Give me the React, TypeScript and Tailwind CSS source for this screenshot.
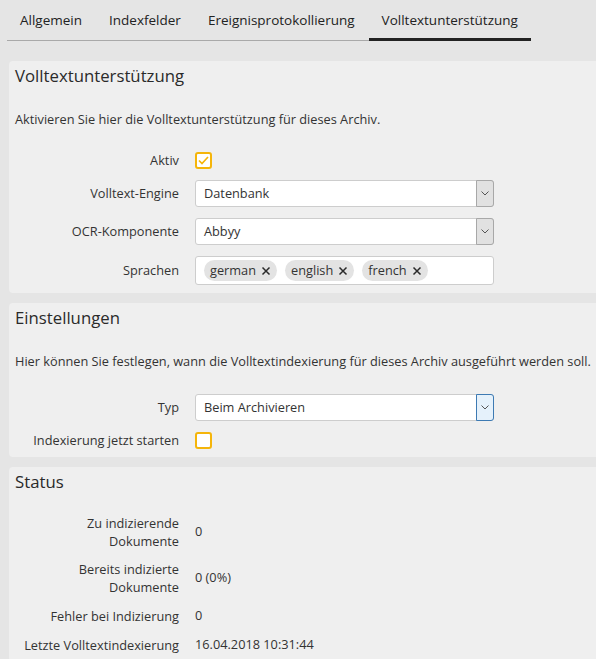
import type { ReactNode } from "react"

const tabs = ["Allgemein", "Indexfelder", "Ereignisprotokollierung", "Volltextunterstützung"]

function Chevron() {
  return (
    <svg width="8" height="5" viewBox="0 0 8 5" fill="none">
      <path d="M0.5 0.5 L4 4 L7.5 0.5" stroke="#555" strokeWidth="1" />
    </svg>
  )
}

function Select({ value, focused = false }: { value: string; focused?: boolean }) {
  return (
    <div className="flex h-[27px] w-[299px] items-stretch rounded-[3px] border border-[#cdcdcd] bg-white">
      <span className="flex flex-1 items-center pl-[8px]">{value}</span>
      <span
        className={
          focused
            ? "-my-px -mr-px flex w-[18px] items-center justify-center rounded-r-[3px] border border-[#3d7ab3] bg-[#e5f1fb]"
            : "-my-px -mr-px flex w-[18px] items-center justify-center rounded-r-[3px] border border-[#a8a8a8] bg-[#e1e1e1]"
        }
      >
        <Chevron />
      </span>
    </div>
  )
}

function Checkbox({ checked = false }: { checked?: boolean }) {
  return (
    <span className="flex h-[17px] w-[17px] items-center justify-center rounded-[3px] border-2 border-[#f5b50a] bg-white">
      {checked ? (
        <svg width="11" height="9" viewBox="0 0 11 9" fill="none">
          <path d="M1 4.5 L4 7.5 L10 1" stroke="#f5b50a" strokeWidth="1.7" />
        </svg>
      ) : null}
    </span>
  )
}

function Tag({ label }: { label: string }) {
  return (
    <span className="flex h-[21px] items-center gap-[5px] rounded-full bg-[#e3e3e3] pl-[6px] pr-[6px]">
      {label}
      <svg width="10" height="10" viewBox="0 0 10 10" fill="none">
        <path d="M1.5 1.5 L8.5 8.5 M8.5 1.5 L1.5 8.5" stroke="#2a2a2a" strokeWidth="1.5" />
      </svg>
    </span>
  )
}

function Row({ label, children, leading = "leading-[17px]" }: { label: ReactNode; children: ReactNode; leading?: string }) {
  return (
    <>
      <span className={`text-right ${leading}`}>{label}</span>
      <div className="flex items-center">{children}</div>
    </>
  )
}

function Panel({
  title,
  description,
  children,
  rowsGap,
}: {
  title: string
  description?: string
  children: ReactNode
  rowsGap: string
}) {
  return (
    <section className="rounded-l-[4px] bg-[#efefef] pb-[8px] pl-[6px] pt-[3px]">
      <h2 className="text-[16.75px] leading-[24px] text-[#2a2a2a]">{title}</h2>
      {description ? <p className="mt-[22px] whitespace-nowrap leading-[18px]">{description}</p> : null}
      <div
        className={`ml-[4px] grid grid-cols-[160px_1fr] items-center gap-x-4 ${rowsGap} ${
          description ? "mt-[24px]" : "mt-[20px]"
        }`}
      >
        {children}
      </div>
    </section>
  )
}

export default function App() {
  return (
    <div className="min-h-screen overflow-hidden bg-[#e5e5e5] font-['Open_Sans',sans-serif] text-[12.75px] text-[#333]">
      <div className="ml-[7px] flex w-fit items-start gap-[1px] border-b border-[#a9a9a9]">
        {tabs.map((tab, i) => {
          const active = i === tabs.length - 1
          return (
            <div
              key={tab}
              className={
                active
                  ? "-mb-px flex h-[41px] items-center border-b-[3px] border-[#222] px-[13px] pt-[2px] text-[13.5px] text-[#222]"
                  : "flex h-[40px] items-center px-[13px] pt-[1px] text-[13.5px] text-[#222]"
              }
            >
              {tab}
            </div>
          )
        })}
      </div>

      <div className="ml-[9px] mt-[20px] flex flex-col gap-[10px]">
        <Panel
          title="Volltextunterstützung"
          description="Aktivieren Sie hier die Volltextunterstützung für dieses Archiv."
          rowsGap="gap-y-[11px]"
        >
          <Row label="Aktiv">
            <Checkbox checked />
          </Row>
          <Row label="Volltext-Engine">
            <Select value="Datenbank" />
          </Row>
          <Row label="OCR-Komponente">
            <Select value="Abbyy" />
          </Row>
          <Row label="Sprachen">
            <div className="flex h-[29px] w-[299px] items-center gap-[8px] rounded-[3px] border border-[#cdcdcd] bg-white pl-[8px]">
              <Tag label="german" />
              <Tag label="english" />
              <Tag label="french" />
            </div>
          </Row>
        </Panel>

        <Panel
          title="Einstellungen"
          description="Hier können Sie festlegen, wann die Volltextindexierung für dieses Archiv ausgeführt werden soll."
          rowsGap="gap-y-[11px]"
        >
          <Row label="Typ">
            <Select value="Beim Archivieren" focused />
          </Row>
          <Row label="Indexierung jetzt starten">
            <Checkbox />
          </Row>
        </Panel>

        <Panel title="Status" rowsGap="gap-y-[10px]">
          <Row label="Zu indizierende Dokumente" leading="leading-[18px]">0</Row>
          <Row label="Bereits indizierte Dokumente" leading="leading-[18px]">0 (0%)</Row>
          <Row label="Fehler bei Indizierung" leading="leading-[18px]">0</Row>
          <Row label="Letzte Volltextindexierung" leading="leading-[18px]">16.04.2018 10:31:44</Row>
        </Panel>
      </div>
    </div>
  )
}
